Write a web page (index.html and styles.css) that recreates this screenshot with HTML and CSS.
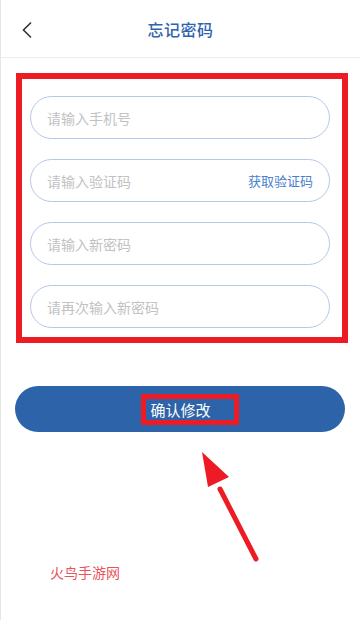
FILE: index.html
```html
<!DOCTYPE html>
<html lang="zh-CN">
<head>
    <meta charset="UTF-8">
    <meta name="viewport" content="width=device-width, initial-scale=1.0">
    <title>忘记密码</title>
    <link rel="stylesheet" href="styles.css">
</head>
<body>
    <div class="page">
        <div class="header">
            <svg class="back" width="12" height="18" viewBox="0 0 12 18">
                <path d="M10 1.5 L2.5 9 L10 16.5" fill="none" stroke="#333" stroke-width="1.6"/>
            </svg>
            <div class="title">忘记密码</div>
        </div>

        <div class="form-box">
            <div class="field"><span class="ph">请输入手机号</span></div>
            <div class="field"><span class="ph">请输入验证码</span><span class="code">获取验证码</span></div>
            <div class="field"><span class="ph">请输入新密码</span></div>
            <div class="field"><span class="ph">请再次输入新密码</span></div>
        </div>

        <div class="submit"><span class="submit-text">确认修改</span></div>

        <svg class="arrow" width="80" height="130" viewBox="0 0 80 130">
            <line x1="63" y1="115" x2="27" y2="45" stroke="#ed1c24" stroke-width="5" stroke-linecap="round"/>
            <polygon points="9,8 15,43 36,33" fill="#ed1c24"/>
        </svg>

        <div class="mark">火鸟手游网</div>
    </div>
</body>
</html>
```

FILE: styles.css
```css
body {
    margin: 0;
    background-color: #fff;
    font-family: 'Noto Sans CJK SC', 'Noto Sans', sans-serif;
}

.page {
    position: relative;
    width: 360px;
    height: 620px;
    border-left: 1px solid #e6e6e6;
    box-sizing: border-box;
}

.header {
    height: 57px;
    border-bottom: 1px solid #ececec;
    display: flex;
    align-items: center;
    justify-content: center;
    position: relative;
}

.back {
    position: absolute;
    left: 20px;
    top: 21px;
}

.title {
    color: #2f63ae;
    font-size: 16px;
    font-weight: 500;
    letter-spacing: 0.5px;
}

.form-box {
    margin: 15px 0 0 15px;
    width: 332px;
    box-sizing: border-box;
    border: 6px solid #ed1c24;
    padding: 17px 12px 9px 8px;
    display: flex;
    flex-direction: column;
    gap: 20px;
}

.field {
    height: 43px;
    border: 1px solid #b4c9e8;
    border-radius: 22px;
    box-sizing: border-box;
    display: flex;
    align-items: center;
    justify-content: space-between;
    padding: 0 16px 0 16px;
    font-size: 14px;
}

.ph {
    color: #c2c2c2;
}

.code {
    color: #4a7fcc;
    font-size: 13px;
}

.submit {
    margin: 43px 0 0 14px;
    width: 330px;
    height: 46px;
    border-radius: 23px;
    background-color: #2d63a8;
    display: flex;
    align-items: center;
    justify-content: center;
}

.submit-text {
    color: #fff;
    font-size: 15px;
    line-height: 21px;
    border: 5px solid #ed1c24;
    padding: 0 23px 0 4px;
    margin-left: 20px;
}

.arrow {
    position: absolute;
    left: 192px;
    top: 444px;
}

.mark {
    position: absolute;
    left: 49px;
    top: 562px;
    color: #e8545a;
    font-size: 14px;
}
```
